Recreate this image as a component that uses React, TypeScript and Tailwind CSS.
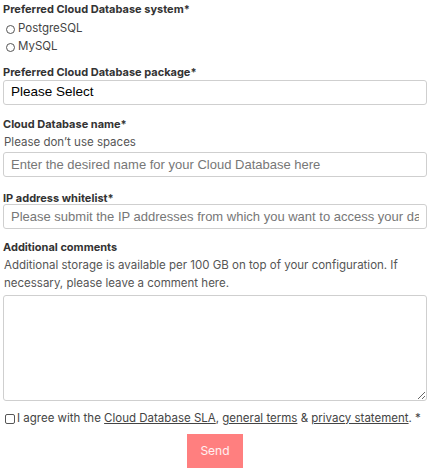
import React from 'react';

const font = { fontFamily: 'Inter, "DejaVu Sans", sans-serif' };

const Label: React.FC<{ children: React.ReactNode; className?: string }> = ({ children, className }) => (
  <label className={`block text-[11px] leading-[18px] font-bold text-[#333] ${className || ''}`}>{children}</label>
);

const Help: React.FC<{ children: React.ReactNode; className?: string }> = ({ children, className }) => (
  <p className={`text-[11.5px] leading-[18px] text-[#555] ${className || ''}`}>{children}</p>
);

const inputCls =
  "block w-full h-[25px] px-[7px] border border-[#cfcfcf] rounded-[3px] bg-white text-[13px] font-['Liberation_Sans',Arial,sans-serif] text-black placeholder:text-[#777] outline-none";

export default function App() {
  return (
    <div className="w-[435px] h-[472px] bg-white overflow-hidden pl-[3px] pr-[8px]" style={font}>
      <Label>Preferred Cloud Database system*</Label>
      <div className="mt-[2px]">
        {['PostgreSQL', 'MySQL'].map((o) => (
          <div key={o} className="flex items-center h-[18px] text-[11.5px] text-[#444]">
            <span className="inline-block w-[9px] h-[9px] rounded-full border border-[#555] mx-[3px]" />
            <span>{o}</span>
          </div>
        ))}
      </div>

      <Label className="mt-[7px]">Preferred Cloud Database package*</Label>
      <div className="mt-[-1px] h-[25px] flex items-center px-[7px] border border-[#cfcfcf] rounded-[3px] text-[13.5px] text-black font-['Liberation_Sans',Arial,sans-serif]">
        Please Select
      </div>

      <Label className="mt-[10px]">Cloud Database name*</Label>
      <Help className="px-[1px]">Please don’t use spaces</Help>
      <input className={`${inputCls} mt-[1px]`} placeholder="Enter the desired name for your Cloud Database here" />

      <Label className="mt-[12px]">IP address whitelist*</Label>
      <input
        className={`${inputCls} mt-[-3px]`}
        placeholder="Please submit the IP addresses from which you want to access your database"
      />

      <Label className="mt-[9px]">Additional comments</Label>
      <Help className="px-[1px]">
        Additional storage is available per 100 GB on top of your configuration. If necessary, please leave a comment here.
      </Help>
      <textarea className="block w-full h-[106px] mt-[3px] border border-[#cfcfcf] rounded-[3px] outline-none resize-y" />

      <div className="mt-[9px] flex items-center h-[18px] text-[11.5px] text-[#444]">
        <span className="inline-block w-[10px] h-[10px] border border-[#555] rounded-[2px] mr-[2px] ml-[2px]" />
        <span>
          I agree with the <a className="underline text-[#444]">Cloud Database SLA</a>,{' '}
          <a className="underline text-[#444]">general terms</a> &amp;{' '}
          <a className="underline text-[#444]">privacy statement</a>. *
        </span>
      </div>

      <div className="flex justify-center mt-[6px]">
        <button className="w-[56px] h-[34px] bg-[#ff7f7f] text-white/90 text-[12px]">Send</button>
      </div>
    </div>
  );
}
